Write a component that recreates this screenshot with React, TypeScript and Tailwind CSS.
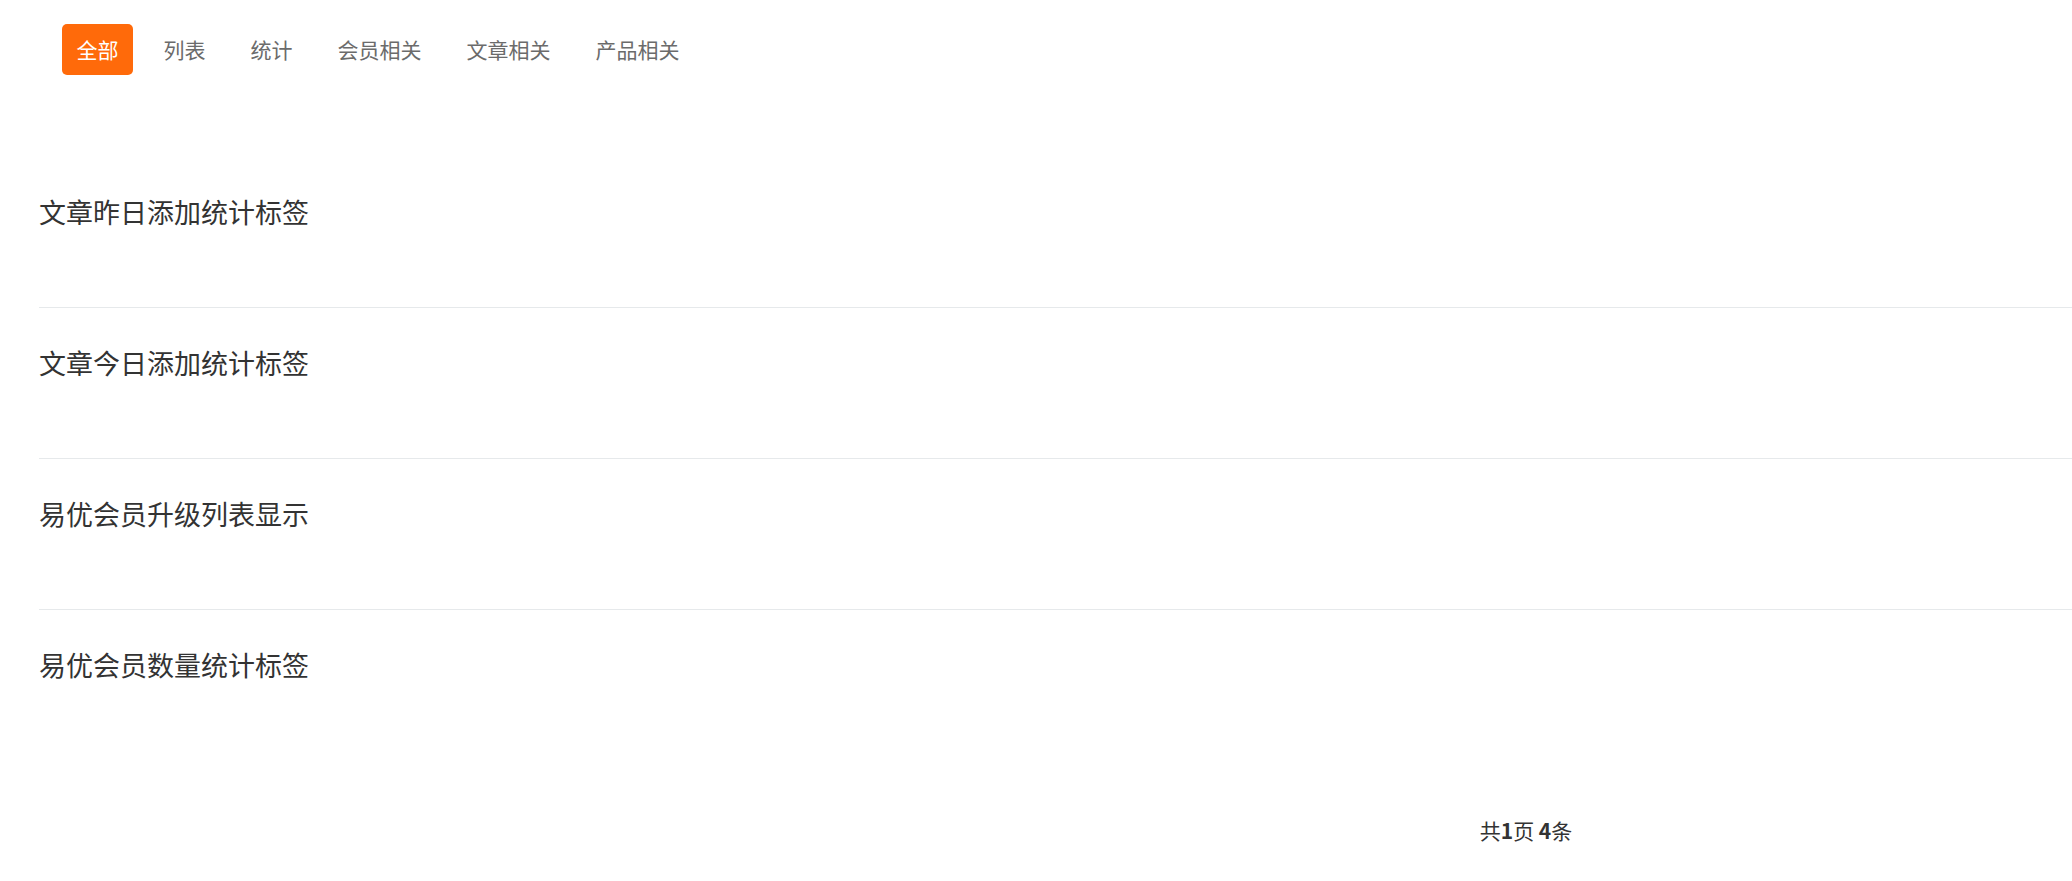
import React from "react";

const tabs = ["全部", "列表", "统计", "会员相关", "文章相关", "产品相关"];
const items = [
  "文章昨日添加统计标签",
  "文章今日添加统计标签",
  "易优会员升级列表显示",
  "易优会员数量统计标签",
];

export default function App() {
  return (
    <div
      className="min-h-[881px] w-[2072px] overflow-hidden bg-white"
      style={{ fontFamily: '"Noto Sans CJK SC", "Noto Sans", sans-serif' }}
    >
      <div className="flex items-center gap-[16px] pl-[62px] pt-[24px]">
        {tabs.map((t, i) => (
          <div
            key={t}
            className={
              i === 0
                ? "flex h-[51px] items-center rounded-[5px] bg-[#ff6a0a] px-[14.5px] text-[21px] leading-[51px] text-white"
                : "flex h-[51px] items-center px-[14.5px] text-[21px] leading-[51px] text-[#6b6b6b]"
            }
          >
            {t}
          </div>
        ))}
      </div>

      <div className="ml-[39px] mt-[82px] w-[2974px]">
        {items.map((t, i) => (
          <div
            key={t}
            className={
              i < items.length - 1
                ? "border-b border-[#e6e9eb] pb-[75px] pt-[35px]"
                : "pb-[75px] pt-[35px]"
            }
          >
            <div className="text-[27px] leading-[40px] text-[#333]">{t}</div>
          </div>
        ))}
        <div className="mt-[55px] text-center text-[21px] leading-[30px] text-[#333]">
          共<b>1</b>页 <b>4</b>条
        </div>
      </div>
    </div>
  );
}
